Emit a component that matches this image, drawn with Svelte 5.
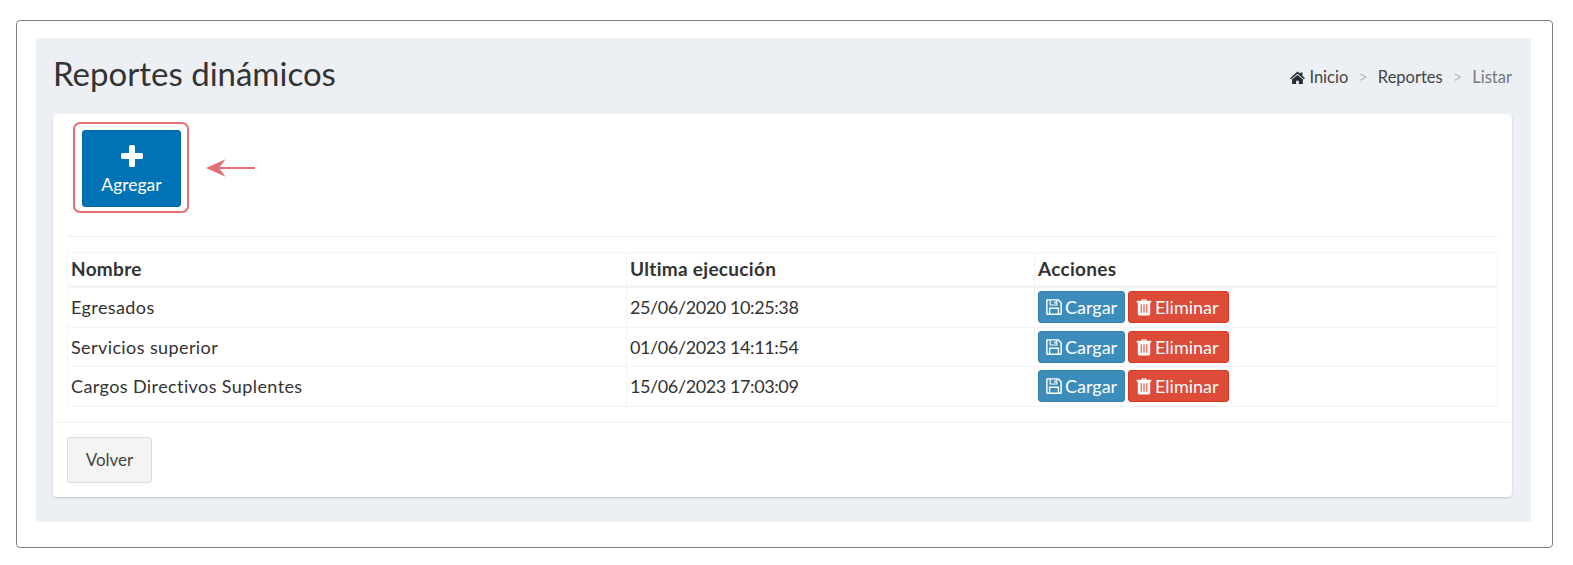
<script>
  let rows = [
    { nombre: 'Egresados', fecha: '25/06/2020 10:25:38' },
    { nombre: 'Servicios superior', fecha: '01/06/2023 14:11:54' },
    { nombre: 'Cargos Directivos Suplentes', fecha: '15/06/2023 17:03:09' }
  ];
</script>

<div class="frame">
  <div class="content">
    <header class="page-head">
      <h1>Reportes dinámicos</h1>
      <ol class="breadcrumb">
        <li>
          <svg class="icon home" viewBox="0 0 16 14"><path d="M8 0.500 L11 3 V1.500 H13.300 V5 L16 7.800 L15 9 L8 3 L1 9 L0 7.800 Z M8 4.200 L13.800 9 V14 H9.500 V10.500 H6.500 V14 H2.200 V9 Z" fill="#222d32"/></svg>
          Inicio
        </li>
        <li class="sep">&gt;</li>
        <li>Reportes</li>
        <li class="sep">&gt;</li>
        <li class="active">Listar</li>
      </ol>
    </header>

    <section class="box">
      <div class="box-body">
        <div class="toolbar">
          <button class="btn-add">
            <svg class="plus" viewBox="0 0 24 24"><path d="M9 2.5a1.5 1.5 0 0 1 1.5-1.5h3A1.5 1.5 0 0 1 15 2.5V9h6.5A1.5 1.5 0 0 1 23 10.500v3a1.500 1.500 0 0 1-1.500 1.500H15v6.500a1.500 1.500 0 0 1-1.500 1.500h-3A1.500 1.500 0 0 1 9 21.500V15H2.500A1.500 1.500 0 0 1 1 13.500v-3A1.500 1.500 0 0 1 2.500 9H9z" fill="#fff"/></svg>
            <span>Agregar</span>
          </button>
          <div class="mark"></div>
          <svg class="arrow" viewBox="0 0 50 20"><path d="M0 10 L20 1 L14 9 H50 V11 H14 L20 19 Z" fill="#e56f74"/></svg>
        </div>

        <hr />

        <table>
          <colgroup>
            <col class="c1" />
            <col class="c2" />
            <col />
          </colgroup>
          <thead>
            <tr>
              <th>Nombre</th>
              <th>Ultima ejecución</th>
              <th>Acciones</th>
            </tr>
          </thead>
          <tbody>
            {#each rows as row}
              <tr>
                <td class="name">{row.nombre}</td>
                <td class="date">{row.fecha}</td>
                <td class="actions">
                  <button class="btn blue">
                    <svg class="icon" viewBox="0 0 16 16"><path d="M1.500 1h10.500l3 3v10a1 1 0 0 1-1 1H2a1 1 0 0 1-1-1V1.500z M2.300 2.300V13.700H3.500V8.500h9V13.700h1.200V4.600L11.500 2.300H11V6.700H4V2.300z M5 2.300V5.700h5V2.300z M8.300 2.800h1.200v2.400H8.300z M4.700 9.700V13.700h6.600V9.700z" fill="#fff" fill-rule="evenodd"/></svg>
                    Cargar
                  </button>
                  <button class="btn red">
                    <svg class="icon" viewBox="0 0 16 16"><path d="M5.500 2.500 L6.300 1 H9.700 L10.500 2.500 H14.500 V4 H13.500 V14 A1.500 1.500 0 0 1 12 15.500 H4 A1.500 1.500 0 0 1 2.500 14 V4 H1.500 V2.500 Z M7 2.500 H9 L8.700 2 H7.300 Z M5 5.500 V13 H6 V5.500 Z M7.500 5.500 V13 H8.500 V5.500 Z M10 5.500 V13 H11 V5.500 Z" fill="#fff" fill-rule="evenodd"/></svg>
                    Eliminar
                  </button>
                </td>
              </tr>
            {/each}
          </tbody>
        </table>
      </div>

      <footer class="box-footer">
        <button class="btn-back">Volver</button>
      </footer>
    </section>
  </div>
</div>

<style>
  :global(body) {
    margin: 0;
    background: #fff;
    font-family: "Lato", "Noto Sans", sans-serif;
    color: #333;
  }

  .frame {
    box-sizing: border-box;
    width: 1537px;
    height: 528px;
    margin: 20px 0 0 16px;
    padding: 17px 21px 25px 19px;
    border: 1px solid #7f7f7f;
    border-radius: 4px;
  }

  .content {
    box-sizing: border-box;
    height: 100%;
    padding: 0 19px 24px 17px;
    background: #ecf0f5;
  }

  .page-head {
    display: flex;
    justify-content: space-between;
    align-items: center;
    height: 76px;
  }

  h1 {
    margin: -7px 0 0;
    font-size: 33px;
    font-weight: 400;
    color: #333;
  }

  .breadcrumb {
    display: flex;
    gap: 10px;
    margin: 1px 0 0;
    padding: 0;
    list-style: none;
    font-size: 16.500px;
    color: #444;
  }

  .breadcrumb .sep { color: #bbb; }
  .breadcrumb .active { color: #777; }

  .home {
    width: 15px;
    height: 13px;
    vertical-align: -1px;
  }

  .box {
    background: #fff;
    border-radius: 4px;
    box-shadow: 0 1px 2px rgba(0, 0, 0, 0.18);
  }

  .box-body {
    padding: 15px 14px;
  }

  .toolbar {
    box-sizing: border-box;
    position: relative;
    height: 107px;
    padding-top: 1px;
  }

  .btn-add {
    display: flex;
    flex-direction: column;
    align-items: center;
    justify-content: center;
    width: 99px;
    height: 77px;
    margin-left: 15px;
    padding: 2px 0 0;
    background: #0073b7;
    border: 1px solid #0068a8;
    border-radius: 3px;
    color: #fff;
    font: inherit;
    font-size: 17.500px;
  }

  .plus {
    width: 24px;
    height: 24px;
    margin-bottom: 6px;
  }

  .mark {
    position: absolute;
    left: 6px;
    top: -7px;
    width: 112px;
    height: 87px;
    border: 2px solid #e56f74;
    border-radius: 7px;
  }

  .arrow {
    position: absolute;
    left: 139px;
    top: 29px;
    width: 49px;
    height: 20px;
  }

  hr {
    margin: 0 0 15px;
    border: 0;
    border-top: 1px solid #f0f0f0;
  }

  table {
    width: 100%;
    table-layout: fixed;
    border-collapse: collapse;
    border: 1px solid #f4f4f4;
    font-size: 18px;
  }

  .c1 { width: 559px; }
  .c2 { width: 408px; }

  th, td {
    padding: 0 3px;
    border: 1px solid #f4f4f4;
    text-align: left;
    color: #333;
  }

  th {
    height: 34px;
    padding-bottom: 2px;
    box-sizing: border-box;
    border-bottom-width: 3px;
    font-size: 19px;
    font-weight: 700;
    letter-spacing: 0.3px;
  }

  td {
    height: 38.500px;
  }

  .name {
    letter-spacing: 0.4px;
  }

  .date {
    letter-spacing: -0.4px;
  }

  .actions {
    font-size: 0;
  }

  .btn {
    display: inline-flex;
    align-items: center;
    justify-content: flex-start;
    gap: 2px;
    height: 32px;
    padding: 0 0 0 6px;
    border-radius: 3px;
    color: #fff;
    font: inherit;
    font-size: 18px;
    vertical-align: middle;
  }

  .btn .icon {
    width: 18px;
    height: 18px;
  }

  .blue {
    width: 87px;
    margin-right: 3px;
    background: #3c8dbc;
    border: 1px solid #367fa9;
  }

  .red {
    width: 101px;
    background: #dd4b39;
    border: 1px solid #d73925;
  }

  .box-footer {
    padding: 14px;
    border-top: 1px solid #f4f4f4;
  }

  .btn-back {
    display: block;
    width: 85px;
    height: 46px;
    padding: 0;
    background: #f4f4f4;
    border: 1px solid #ddd;
    border-radius: 3px;
    color: #444;
    font: inherit;
    font-size: 17px;
  }
</style>
